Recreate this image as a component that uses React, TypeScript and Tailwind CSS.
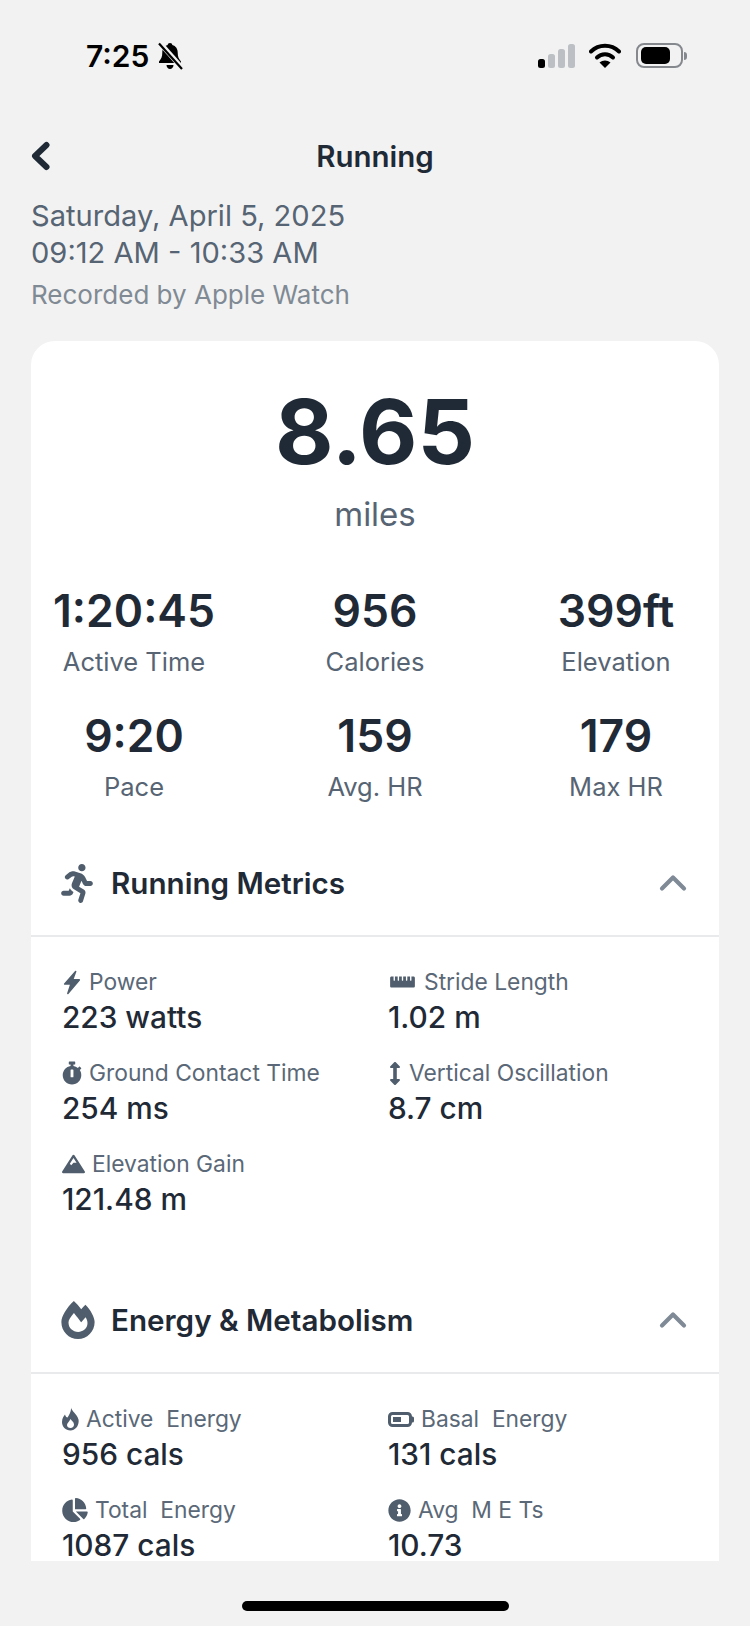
import type { ReactNode } from "react";
import {
  FaRunning,
  FaRulerHorizontal,
  FaStopwatch,
  FaArrowsAltV,
  FaMountain,
  FaFireAlt,
  FaChartPie,
  FaInfoCircle,
} from "react-icons/fa";
import { ChevronUp } from "lucide-react";

const summary = [
  { value: "1:20:45", label: "Active Time" },
  { value: "956", label: "Calories" },
  { value: "399ft", label: "Elevation" },
  { value: "9:20", label: "Pace" },
  { value: "159", label: "Avg. HR" },
  { value: "179", label: "Max HR" },
];

const BoltIcon = () => (
  <svg viewBox="0 0 18 24" className="h-[25px] w-[20px]">
    <path d="M12.500 1.500L2 13.500h6L5 22.500 16 9.500h-6.500z" fill="currentColor" stroke="currentColor" strokeWidth="1.500" strokeLinejoin="round" />
  </svg>
);

const FlameIcon = () => (
  <svg viewBox="0 0 17 24" className="h-[24px] w-[17px]">
    <path d="M9 .5c.5 3.500 6 6.500 7.500 12 1 6-3 11-8 11s-8.500-4-8.500-8.500c0-4 2-6 3-7.500.5 2 1.500 3 2.500 3C7 8 9.500 4 9 .5z" fill="currentColor" />
    <path d="M8.500 12c-1.500 3-3.500 4-3.500 6s1.500 3 3.500 3 3.500-1.500 3.500-3.500c0-2.500-2.500-3.500-3.500-5.500z" fill="#fff" />
  </svg>
);

const BatteryIcon = () => (
  <svg viewBox="0 0 26 15" className="h-[15px] w-[26px]">
    <rect x="1.500" y="1.500" width="21" height="12" rx="3" fill="none" stroke="currentColor" strokeWidth="3" />
    <rect x="5" y="5" width="8" height="5" fill="currentColor" />
    <path d="M24 4.500h.5a1.500 1.500 0 0 1 1.500 1.500v3a1.500 1.500 0 0 1-1.500 1.500H24z" fill="currentColor" />
  </svg>
);

const runningMetrics = [
  { icon: <BoltIcon />, label: "Power", value: "223 watts" },
  { icon: <FaRulerHorizontal className="h-[22px] w-[29px]" />, label: "Stride Length", value: "1.02 m" },
  { icon: <FaStopwatch className="h-[24px] w-[20px]" />, label: "Ground Contact Time", value: "254 ms" },
  { icon: <FaArrowsAltV className="h-[23px] w-[14px]" />, label: "Vertical Oscillation", value: "8.7 cm" },
  { icon: <FaMountain className="h-[20px] w-[23px]" />, label: "Elevation Gain", value: "121.48 m" },
];

const energyMetrics = [
  { icon: <FlameIcon />, label: "Active  Energy", value: "956 cals" },
  { icon: <BatteryIcon />, label: "Basal  Energy", value: "131 cals" },
  { icon: <FaChartPie className="h-[24px] w-[26px]" />, label: "Total  Energy", value: "1087 cals" },
  { icon: <FaInfoCircle className="h-[23px] w-[23px]" />, label: "Avg  M E Ts", value: "10.73" },
];

interface Metric {
  icon: ReactNode;
  label: string;
  value: string;
}

const StatusBar = () => (
  <div className="flex h-[131px] items-start justify-between pl-[86px] pr-[63px] pt-[36px]">
    <div className="flex items-center gap-[8px]">
      <span className="text-[30px] font-semibold leading-[40px] text-black">7:25</span>
      <svg viewBox="0 0 26 28" className="h-[28px] w-[26px]">
        <path d="M13 1c1.400 0 2.300.9 2.300 2 3.700 1 5.400 4 5.400 7.600 0 4.400 1.100 6.600 3.300 8.800v1.600H2v-1.600c2.200-2.200 3.300-4.400 3.300-8.800C5.300 7 7 4 10.700 3c0-1.100.9-2 2.300-2z" fill="#000" />
        <path d="M9.500 23h7c0 2.300-1.500 4-3.500 4s-3.500-1.700-3.500-4z" fill="#000" />
        <path d="M2 0l24 27" stroke="#f2f2f2" strokeWidth="5" />
        <path d="M2 1.500L25 27" stroke="#000" strokeWidth="2.200" />
      </svg>
    </div>
    <div className="flex items-center pt-[7px]">
      <svg viewBox="0 0 37 24" className="h-[24px] w-[37px]">
        <rect x="0" y="15" width="7" height="9" rx="2.500" fill="#000" />
        <rect x="10" y="10" width="7" height="14" rx="2.500" fill="#bcc0c4" />
        <rect x="20" y="5" width="7" height="19" rx="2.500" fill="#bcc0c4" />
        <rect x="30" y="0" width="7" height="24" rx="2.500" fill="#bcc0c4" />
      </svg>
      <svg viewBox="0 0 32 25" className="ml-[14px] h-[25px] w-[32px]">
        <path d="M2 8.500a20 20 0 0 1 28 0" fill="none" stroke="#000" strokeWidth="4" strokeLinecap="round" />
        <path d="M8 14.500a11.500 11.500 0 0 1 16 0" fill="none" stroke="#000" strokeWidth="4" strokeLinecap="round" />
        <path d="M10.500 19.500c3.200-2.800 7.800-2.800 11 0L16 25z" fill="#000" />
      </svg>
      <div className="ml-[15px] flex items-center">
        <div className="flex h-[25px] w-[47px] items-center rounded-[8px] border-2 border-[#85898e] px-[3px]">
          <div className="h-[17px] w-[29px] rounded-[5px] bg-black" />
        </div>
        <div className="ml-[1px] h-[8px] w-[3px] rounded-r-full bg-[#85898e]" />
      </div>
    </div>
  </div>
);

const MetricGrid = ({ items }: { items: Metric[] }) => (
  <div className="grid grid-cols-[326px_1fr] gap-y-[29px] pl-[31px] pt-[32px]">
    {items.map((item) => (
      <div key={item.label} className="flex h-[62px] flex-col">
        <div className="flex h-[26px] items-center gap-[7px] text-[#4f5d6c]">
          <span className="flex items-center justify-center">{item.icon}</span>
          <span className="whitespace-pre text-[22.800px] leading-[26px] text-[#5a6877]">{item.label}</span>
        </div>
        <div className="mt-[5px] text-[29.800px] font-medium leading-[34px] text-[#1f2a36]">{item.value}</div>
      </div>
    ))}
  </div>
);

const SectionHeader = ({ icon, title }: { icon: ReactNode; title: string }) => (
  <div className="flex h-[106px] items-center justify-between border-b-2 border-[#e8eaec] pl-[30px] pr-[24px]">
    <div className="flex items-center">
      <span className="flex w-[50px] items-center">{icon}</span>
      <span className="text-[29.600px] font-semibold leading-[38px] text-[#1f2a36]">{title}</span>
    </div>
    <ChevronUp className="h-[44px] w-[44px] text-[#7f8a96]" strokeWidth={2.300} />
  </div>
);

export default function App() {
  return (
    <div
      className="flex h-[1626px] w-[750px] flex-col overflow-hidden bg-[#f2f2f2]"
      style={{ fontFamily: "Inter, 'Liberation Sans', sans-serif" }}
    >
      <StatusBar />

      <div className="relative flex h-[50px] items-center justify-center">
        <svg viewBox="0 0 21 30" className="absolute left-[30px] top-[10px] h-[30px] w-[21px]">
          <path d="M16.500 4L5 15 16.500 26" fill="none" stroke="#1f2a36" strokeWidth="6" strokeLinecap="round" strokeLinejoin="round" />
        </svg>
        <span className="text-[29.500px] font-semibold leading-[50px] text-[#1f2a36]">Running</span>
      </div>

      <div className="px-[31px] pt-[16px]">
        <p className="text-[29.100px] leading-[37px] text-[#566473]">Saturday, April 5, 2025</p>
        <p className="text-[29.100px] leading-[37px] text-[#566473]">09:12 AM - 10:33 AM</p>
        <p className="mt-[8px] text-[26px] leading-[32px] text-[#808a94]">Recorded by Apple Watch</p>
      </div>

      <div className="ml-[31px] mt-[30px] h-[1220px] w-[688px] overflow-hidden rounded-t-[24px] bg-white">
        <div className="flex flex-col items-center pt-[38px]">
          <span className="text-[90px] font-bold leading-[106px] text-[#1f2a36]">8.65</span>
          <span className="mt-[9px] text-[33px] leading-[40px] text-[#566473]">miles</span>
        </div>

        <div className="mt-[50px] grid grid-cols-[241px_241px_241px] justify-center gap-y-[31px]">
          {summary.map((stat) => (
            <div key={stat.label} className="flex flex-col items-center">
              <span className="text-[44.500px] font-semibold leading-[54px] text-[#1f2a36]">{stat.value}</span>
              <span className="mt-[8px] text-[25.500px] leading-[32px] text-[#566473]">{stat.label}</span>
            </div>
          ))}
        </div>

        <div className="mt-[28px]">
          <SectionHeader icon={<FaRunning className="h-[39px] w-[32px] text-[#4f5d6c]" />} title="Running Metrics" />
          <MetricGrid items={runningMetrics} />
        </div>

        <div className="mt-[55px]">
          <SectionHeader icon={<FaFireAlt className="h-[38px] w-[34px] text-[#4f5d6c]" />} title="Energy & Metabolism" />
          <MetricGrid items={energyMetrics} />
        </div>
      </div>

      <div className="flex flex-1 justify-center pt-[40px]">
        <div className="h-[10px] w-[267px] rounded-full bg-black" />
      </div>
    </div>
  );
}
